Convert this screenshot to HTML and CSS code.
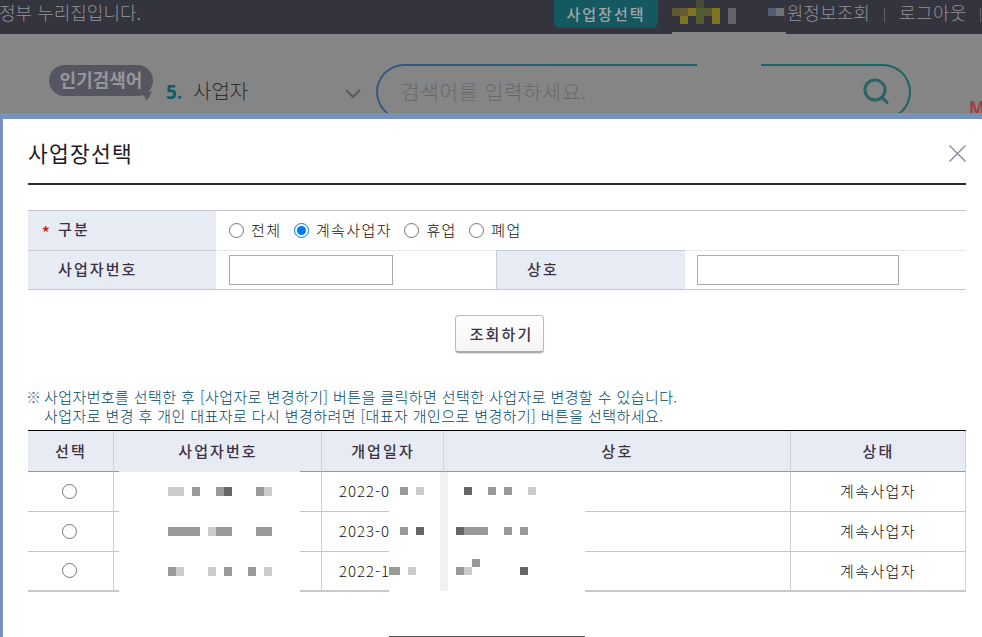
FILE: index.html
```html
<!DOCTYPE html>
<html lang="ko">
<head>
  <meta charset="UTF-8">
  <meta name="viewport" content="width=device-width, initial-scale=1.0">
  <title>사업장선택</title>
  <link rel="stylesheet" href="styles.css">
</head>

<body>
  <header class="topbar">
    <span class="notice">정부 누리집입니다.</span>
    <nav class="util">
      <a href="#" class="btn-select">사업장선택</a>
      <a href="#" class="user-link">회원정보조회</a>
      <a href="#" class="logout">로그아웃</a>
    </nav>
    <!-- masked user name -->
    <svg class="mask-user" viewBox="672 0 114 34" shape-rendering="crispEdges">
      <path fill="#34343f" d="M672 0h112v32h-112z"/>
      <path fill="#858585" d="M672 32h114v2h-114z"/>
      <path fill="#484a3a" d="M696 0h8v8h-8z"/>
      <path fill="#5e5a30" d="M672 8h8v8h-8z"/>
      <path fill="#665a3e" d="M680 8h8v8h-8zM704 8h8v8h-8z"/>
      <path fill="#80741e" d="M688 8h8v8h-8zM712 8h8v8h-8zM680 16h8v8h-8zM712 16h8v8h-8z"/>
      <path fill="#565c32" d="M696 8h8v16h-8zM704 8h8v8h-8z"/>
      <path fill="#62656d" d="M728 8h8v16h-8z"/>
      <path fill="#525c7a" d="M768 8h8v8h-8z"/>
      <path fill="#707276" d="M776 8h8v8h-8z"/>
    </svg>
  </header>

  <section class="search-area">
    <span class="hot-label">인기검색어
      <svg class="tail" width="14" height="10" viewBox="0 0 14 10"><path fill="#555662" d="M0 3L14 0Q12 6 8 10Q8 6 5 4Z"/></svg>
    </span>
    <span class="rank">5.</span>
    <span class="keyword">사업자</span>
    <svg class="arrow" width="16" height="10" viewBox="0 0 16 10"><path d="M1 1l7 7 7-7" fill="none" stroke="#5a5a5e" stroke-width="2"/></svg>
    <div class="search-box">
      <span>검색어를 입력하세요.</span>
      <svg width="26" height="27" viewBox="0 0 26 27"><g fill="none" stroke="#2a6467" stroke-width="3"><circle cx="12" cy="12" r="10"/><path d="M18.5 19l5.5 5.5" stroke-linecap="round"/></g></svg>
    </div>
    <span class="menu-text">M</span>
  </section>

  <main class="popup">
    <div class="popup-head">
      <h1>사업장선택</h1>
      <svg width="17" height="17" viewBox="0 0 17 17"><path d="M.5.5l16 16M16.5.5l-16 16" stroke="#858a9e" stroke-width="1.4"/></svg>
    </div>

    <form class="search-form">
      <div class="form-row">
        <div class="form-label"><em>*</em>구분</div>
        <div class="form-field radios">
          <label><input type="radio" name="type">전체</label>
          <label><input type="radio" name="type" checked>계속사업자</label>
          <label><input type="radio" name="type">휴업</label>
          <label><input type="radio" name="type">폐업</label>
        </div>
      </div>
      <div class="form-row two">
        <div class="form-label">사업자번호</div>
        <div class="form-field"><input type="text" class="num"></div>
        <div class="form-label second">상호</div>
        <div class="form-field"><input type="text" class="name"></div>
      </div>
    </form>

    <button type="button" class="btn-search">조회하기</button>

    <div class="guide">
      <span class="mark">※</span>
      <p>사업자번호를 선택한 후 [사업자로 변경하기] 버튼을 클릭하면 선택한 사업자로 변경할 수 있습니다.<br>사업자로 변경 후 개인 대표자로 다시 변경하려면 [대표자 개인으로 변경하기] 버튼을 선택하세요.</p>
    </div>

    <div class="list-wrap">
      <table class="list">
        <colgroup>
          <col class="c1"><col class="c2"><col class="c3"><col class="c4"><col class="c5">
        </colgroup>
        <thead>
          <tr><th>선택</th><th>사업자번호</th><th>개업일자</th><th>상호</th><th>상태</th></tr>
        </thead>
        <tbody>
          <tr><td><input type="radio" name="biz"></td><td></td><td class="date">2022-0</td><td></td><td>계속사업자</td></tr>
          <tr><td><input type="radio" name="biz"></td><td></td><td class="date">2023-0</td><td></td><td>계속사업자</td></tr>
          <tr><td><input type="radio" name="biz"></td><td></td><td class="date">2022-1</td><td></td><td>계속사업자</td></tr>
        </tbody>
      </table>
      <!-- masked numbers, dates and names -->
      <svg class="mask-list" viewBox="28 430 938 207" shape-rendering="crispEdges">
        <path fill="#fff" d="M119 472h181v122h-181zM389 472h196v165h-196z"/>
        <path fill="#e8edf5" d="M119 471h181v1h-181z"/>
        <path fill="#f1f1f1" d="M440 472h8v119h-8z"/>
        <path fill="#ccc" d="M168 487h16v9h-16zM264 487h8v9h-8zM208 527h8v9h-8zM176 567h8v9h-8zM208 567h8v9h-8zM264 567h8v9h-8zM416 487h8v8h-8zM528 487h8v8h-8zM408 567h8v8h-8zM464 567h8v8h-8z"/>
        <path fill="#999" d="M192 487h8v9h-8zM216 487h8v9h-8zM256 487h8v9h-8zM168 527h32v9h-32zM216 527h16v9h-16zM256 527h16v9h-16zM168 567h8v9h-8zM224 567h8v9h-8zM248 567h8v9h-8z"/>
        <path fill="#999" d="M400 487h8v8h-8zM488 487h8v8h-8zM504 487h8v8h-8zM400 527h8v8h-8zM464 527h24v8h-24zM504 527h8v8h-8zM520 527h8v8h-8zM389 567h11v8h-11zM456 567h8v8h-8zM472 559h8v8h-8z"/>
        <path fill="#666" d="M224 487h8v9h-8zM464 487h8v8h-8zM416 527h8v8h-8zM456 527h8v8h-8zM520 567h8v8h-8z"/>
        <path fill="#555" d="M389 636h196v1h-196z"/>
      </svg>
    </div>
  </main>
</body>
</html>
```

FILE: styles.css
```css
* {
  box-sizing: border-box;
}

body {
  margin: 0;
  height: 637px;
  overflow: hidden;
  font-family: "Noto Sans CJK KR", sans-serif;
  font-size: 15px;
  color: #111;
  background: #fff;
}

a {
  color: inherit;
  text-decoration: none;
}

.topbar {
  position: relative;
  height: 34px;
  display: flex;
  justify-content: space-between;
  background: #34343f;
  color: #929297;
  font-size: 18px;
  font-weight: 300;
  line-height: 24px;
  white-space: nowrap;
}

.notice {
  margin-left: -1px;
}

.util {
  display: flex;
  width: 428px;
}

.btn-select {
  width: 104px;
  height: 28px;
  line-height: 27px;
  border-radius: 0 0 6px 6px;
  background: #14595f;
  color: #a0a5a8;
  font-size: 15px;
  font-weight: 500;
  letter-spacing: 2px;
  text-align: center;
}

.user-link {
  margin-left: 112px;
  letter-spacing: 0.1px;
}

.logout {
  position: relative;
  margin-left: 29px;
  letter-spacing: 0.4px;
}

.logout::before,
.logout::after {
  content: "";
  position: absolute;
  top: 8px;
  left: -15px;
  width: 1px;
  height: 14px;
  background: #62626c;
}

.logout::after {
  left: 81px;
}

.mask-user {
  position: absolute;
  left: 672px;
  top: 0;
  width: 114px;
  height: 34px;
}

.search-area {
  display: flex;
  align-items: flex-start;
  height: 79px;
  padding-left: 49px;
  overflow: hidden;
  background: #858585;
  white-space: nowrap;
}

.hot-label {
  position: relative;
  width: 104px;
  flex: none;
  height: 31px;
  margin-top: 31px;
  border-radius: 16px;
  background: #555662;
  color: #96969b;
  font-size: 18px;
  font-weight: 700;
  line-height: 28px;
  text-align: center;
}

.tail {
  position: absolute;
  right: 1px;
  bottom: -5px;
}

.rank {
  flex: none;
  margin: 44px 0 0 13px;
  width: 27px;
  color: #155b63;
  font-family: "Open Sans", sans-serif;
  font-size: 19px;
  font-weight: 700;
  line-height: 28px;
}

.keyword {
  flex: none;
  width: 152px;
  margin-top: 43px;
  color: #2e2e30;
  font-size: 20px;
  font-weight: 300;
  line-height: 28px;
}

.arrow {
  flex: none;
  margin-top: 55px;
}

.search-box {
  position: relative;
  display: flex;
  flex: none;
  justify-content: space-between;
  width: 535px;
  height: 56px;
  margin: 30px 0 0 15px;
  padding: 12px 20px 0 23px;
  border: 2.5px solid transparent;
  border-radius: 28px;
  background: linear-gradient(#858585, #858585) padding-box, linear-gradient(90deg, #35587f, #215f66 60%, #1c6460) border-box;
  color: #68686b;
  font-size: 20px;
  font-weight: 300;
  line-height: 27px;
  letter-spacing: 0.9px;
}

.search-box::before {
  content: "";
  position: absolute;
  left: 319px;
  top: -4px;
  width: 64px;
  height: 8px;
  background: #858585;
}

.menu-text {
  margin: 62px 0 0 58px;
  color: #a03c44;
  font-family: "Open Sans", sans-serif;
  font-size: 17px;
  font-weight: 700;
  line-height: 24px;
}

.popup {
  height: 524px;
  padding: 0 16px 0 25px;
  border-top: 6px solid #7592bb;
  border-left: 3px solid #7592bb;
  background: #fff;
}

.popup-head {
  display: flex;
  align-items: center;
  justify-content: space-between;
  height: 66px;
  padding-top: 4px;
  border-bottom: 2px solid #2e2e32;
}

.popup-head h1 {
  margin: 0;
  color: #1f1b26;
  font-size: 21.5px;
  font-weight: 400;
  line-height: 30px;
  letter-spacing: 1.2px;
}

.search-form {
  margin-top: 25px;
  border-top: 1px solid #c4c6cc;
  border-bottom: 1px solid #c4c6cc;
}

.form-row {
  display: grid;
  grid-template-columns: 188px 1fr;
  height: 39px;
}

.form-row.two {
  grid-template-columns: 188px 280px 189px 1fr;
  border-top: 1px solid #e6e7ea;
}

.form-label {
  position: relative;
  padding-left: 30px;
  background: #e7ebf4;
  color: #3b3144;
  font-weight: 500;
  line-height: 36px;
  letter-spacing: 2.1px;
}

.form-label em {
  position: absolute;
  left: 14px;
  top: 3px;
  color: #d01f1f;
  font-style: normal;
  font-weight: 700;
}

.two .form-label {
  margin-top: -1px;
  border-top: 1px solid #c3cbdc;
}

.form-label.second {
  border-left: 1px solid #c3cbdc;
}

.form-field {
  display: flex;
  align-items: center;
  padding-left: 12px;
}

.form-field input[type="text"] {
  height: 30px;
  border: 1px solid #aaa;
  background: #fff;
}

.form-field .num {
  width: 164px;
  margin-left: 1px;
}

.form-field .name {
  width: 202px;
}

.radios {
  padding-bottom: 1px;
}

.radios label {
  display: flex;
  align-items: center;
  line-height: 20px;
  font-weight: 300;
  letter-spacing: 1.4px;
}

.radios label + label {
  margin-left: 11.5px;
}

input[type="radio"] {
  width: 15px;
  height: 15px;
  margin: 0;
}

.radios input[type="radio"] {
  margin: 1px 7px 0 1px;
}

.btn-search {
  display: block;
  width: 89px;
  height: 38px;
  margin: 25px auto 0 427px;
  padding: 0 0 1px 4px;
  border: 1px solid #bbb;
  border-bottom: 2px solid #aaa;
  border-radius: 4px;
  background: linear-gradient(#fff, #f5f5f6);
  box-shadow: 0 1px 1px #ddd;
  color: #3b3144;
  font-family: inherit;
  font-size: 15px;
  font-weight: 500;
  letter-spacing: 2.1px;
}

.guide {
  display: flex;
  height: 77px;
  padding-top: 34px;
  color: #00486a;
  line-height: 19px;
  font-weight: 300;
  letter-spacing: 0.41px;
  white-space: nowrap;
}

.guide .mark {
  width: 18px;
  margin-left: -2px;
  color: #6d7f99;
}

.guide p {
  margin: 0;
}

.list-wrap {
  position: relative;
}

.list {
  width: 938px;
  border-collapse: separate;
  border-spacing: 0;
  border-top: 1px solid #000;
  table-layout: fixed;
}

.c1 { width: 86px; }
.c2 { width: 208px; }
.c3 { width: 122px; }
.c4 { width: 347px; }
.c5 { width: 175px; }

.list th,
.list td {
  height: 40px;
  padding: 0 0 1px;
  border-right: 1px solid #d0d2d8;
  border-bottom: 1px solid #c4c5c8;
  line-height: 20px;
  text-align: center;
  vertical-align: middle;
}

.list th {
  height: 41px;
  padding-left: 1px;
  border-bottom-color: #9599a2;
  background: #e7ebf4;
  color: #3b3144;
  font-weight: 500;
  letter-spacing: 2.1px;
}

.list td {
  font-weight: 300;
  letter-spacing: 1.4px;
}

.list tbody tr:last-child td {
  border-bottom: 2px solid #c8c9cc;
}

.list td input {
  display: block;
  margin: 0 auto;
  position: relative;
  left: -1px;
}

.list td.date {
  padding-left: 17px;
  letter-spacing: 1px;
  text-align: left;
}

.mask-list {
  position: absolute;
  left: 0;
  top: 0;
  width: 938px;
  height: 207px;
}
```
